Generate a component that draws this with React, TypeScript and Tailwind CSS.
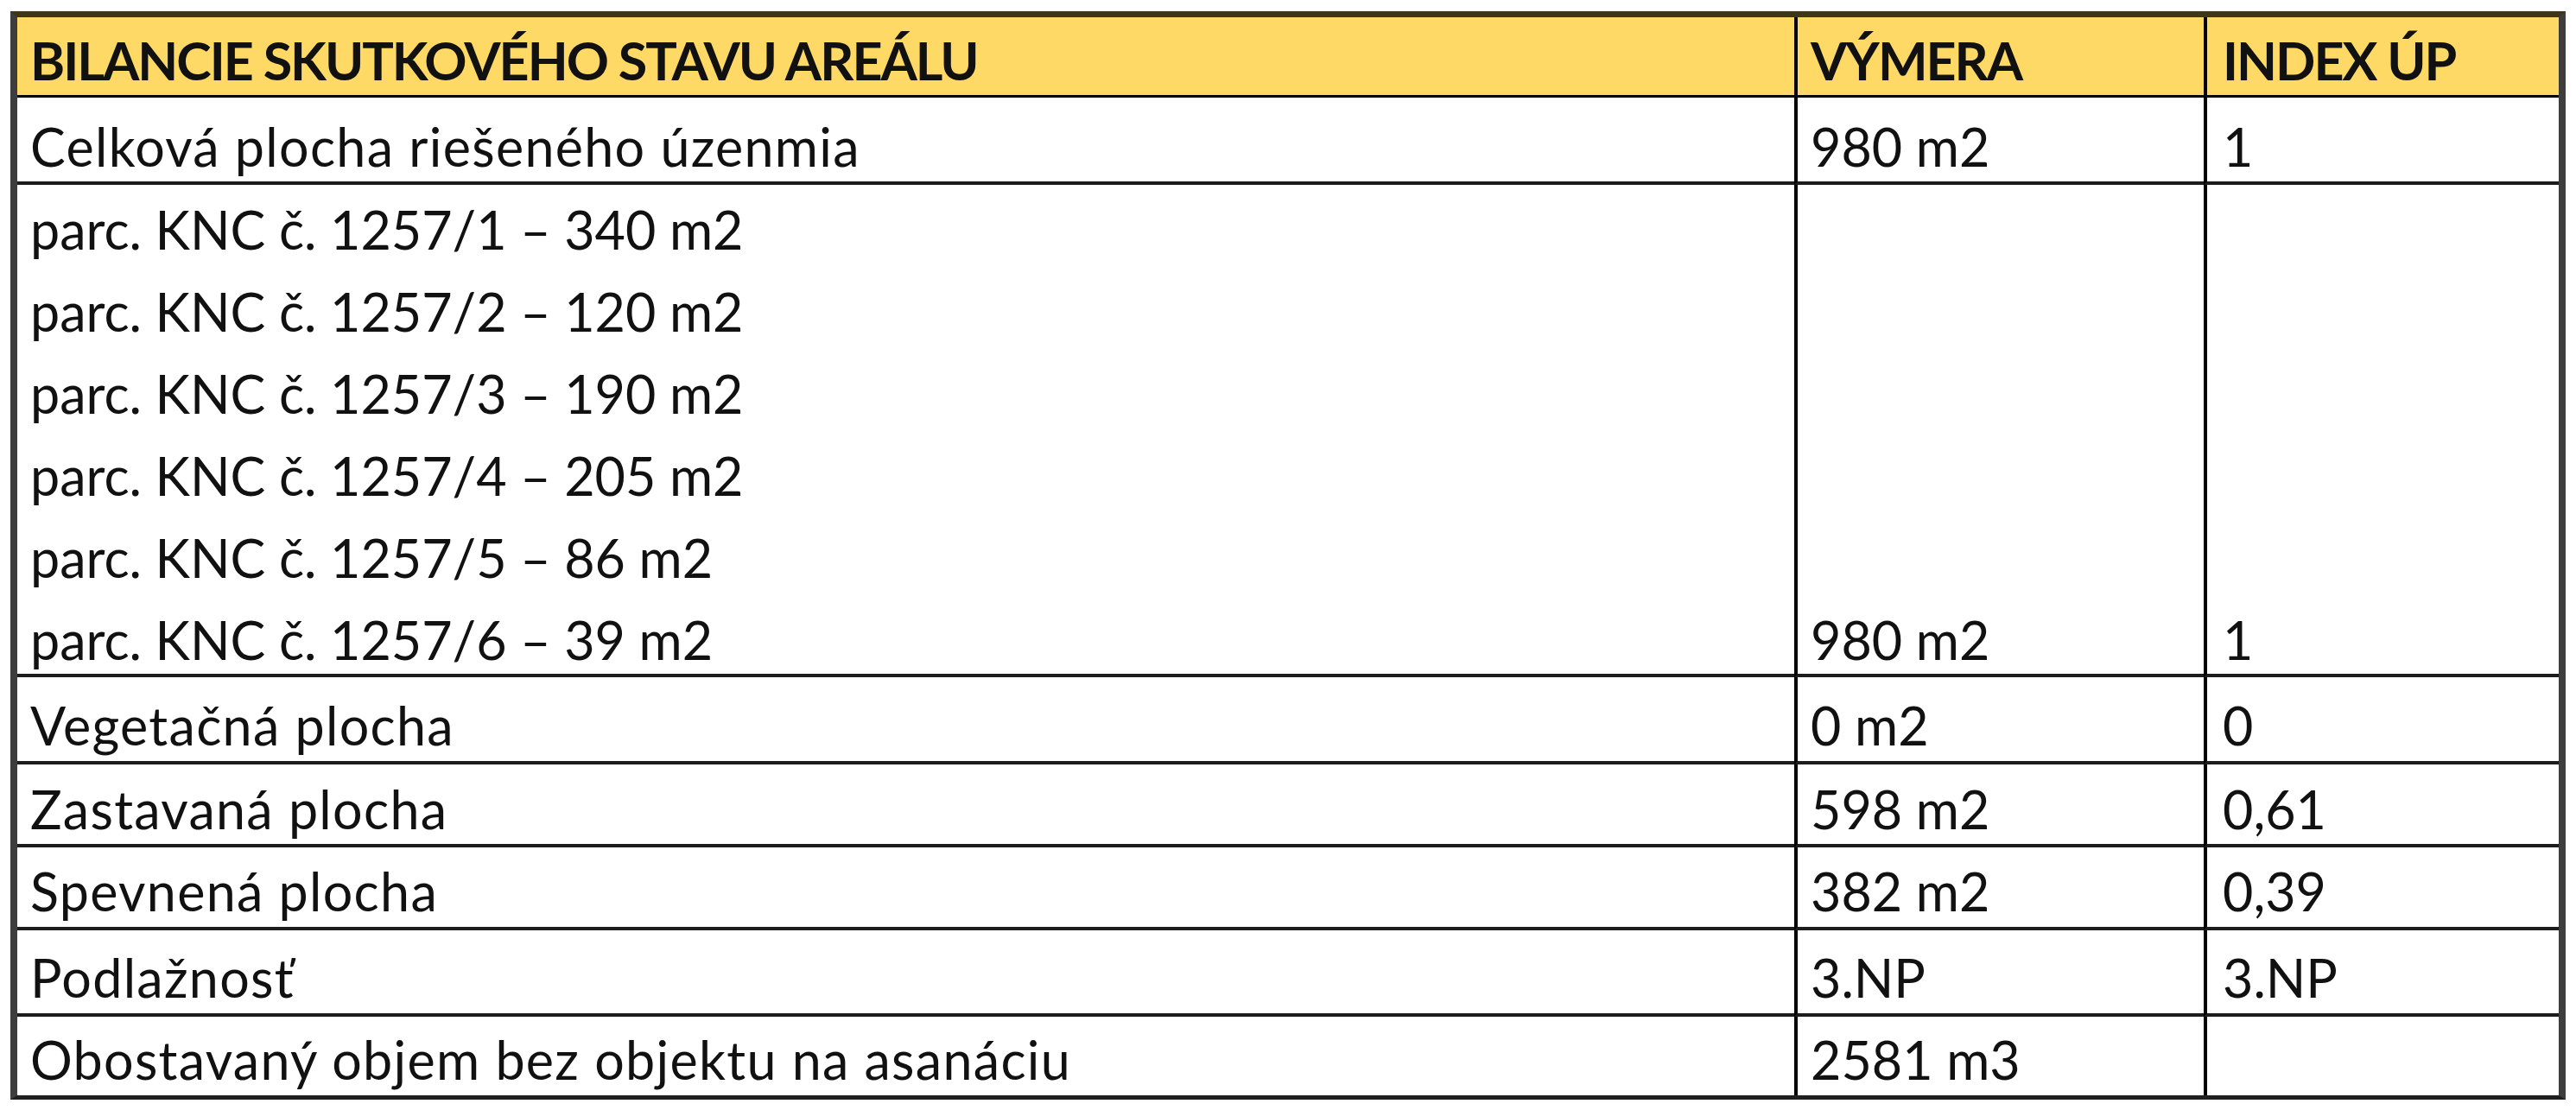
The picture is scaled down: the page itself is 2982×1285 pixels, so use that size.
import React from 'react';

// Bilance table: label / výmera / index ÚP
type Row = {
  label: string;
  area: string;
  index: string;
  h: string; // row height incl. bottom rule
  pt: string; // top padding that puts the baseline where the sheet has it
  last?: boolean;
};

const rows: Row[] = [
  { label: 'Celková plocha riešeného úzenmia', area: '980 m2', index: '1', h: 'h-[101px]', pt: 'pt-[20px]' },
  { label: 'Vegetačná plocha', area: '0 m2', index: '0', h: 'h-[101px]', pt: 'pt-[19px]' },
  { label: 'Zastavaná plocha', area: '598 m2', index: '0,61', h: 'h-[96px]', pt: 'pt-[15px]' },
  { label: 'Spevnená plocha', area: '382 m2', index: '0,39', h: 'h-[96px]', pt: 'pt-[14px]' },
  { label: 'Podlažnosť', area: '3.NP', index: '3.NP', h: 'h-[100px]', pt: 'pt-[18px]' },
  { label: 'Obostavaný objem bez objektu na asanáciu', area: '2581 m3', index: '', h: 'h-[91px]', pt: 'pt-[13px]', last: true },
];

const parcels = [
  'parc. KNC č. 1257/1 – 340 m2',
  'parc. KNC č. 1257/2 – 120 m2',
  'parc. KNC č. 1257/3 – 190 m2',
  'parc. KNC č. 1257/4 – 205 m2',
  'parc. KNC č. 1257/5 – 86 m2',
  'parc. KNC č. 1257/6 – 39 m2',
];

const font = "font-['Lato','Noto_Sans',sans-serif]";

function SimpleRow({ row }: { row: Row }) {
  const rule = row.last ? '' : 'border-b-4 border-[#1c1c1c]';
  const cell = `${row.h} ${row.pt} ${rule} px-[15px] leading-[73px] whitespace-nowrap`;
  return (
    <>
      <div className={`${cell} tracking-[1.3px]`}>{row.label}</div>
      <div className={`${cell} border-l-4 border-l-black`}>{row.area}</div>
      <div className={`${cell} border-l-4 border-l-black px-[18px]`}>{row.index}</div>
    </>
  );
}

export default function App() {
  const [first, ...rest] = rows;
  const head = 'h-[93px] bg-[#ffd966] pt-[13px] leading-[73px] font-bold tracking-[-2px] border-b-[3px] border-black whitespace-nowrap';

  return (
    <div className={`min-h-screen bg-white pt-[13px] pl-[12px] text-[61px] text-[#111] ${font}`}>
      <div className="w-[2958px] border-x-8 border-t-[7px] border-b-[5px] border-x-[#3d3d3d] border-t-[#3f3518] border-b-[#1f1f1f]">
        <div className="grid grid-cols-[2057px_474px_411px]">
          {/* header */}
          <div className={`${head} px-[15px]`}>BILANCIE SKUTKOVÉHO STAVU AREÁLU</div>
          <div className={`${head} px-[15px] border-l-4 border-l-black`}>VÝMERA</div>
          <div className={`${head} px-[18px] border-l-4 border-l-black`}>INDEX ÚP</div>

          <SimpleRow row={first} />

          {/* parcels block, totals sit on the last line */}
          <div className="h-[570px] pt-[4px] px-[15px] border-b-4 border-[#1c1c1c]">
            {parcels.map((p) => (
              <div key={p} className="leading-[95px] whitespace-nowrap">
                {p}
              </div>
            ))}
          </div>
          <div className="h-[570px] pt-[4px] px-[15px] border-b-4 border-[#1c1c1c] border-l-4 border-l-black">
            <div className="mt-[475px] leading-[95px]">980 m2</div>
          </div>
          <div className="h-[570px] pt-[4px] px-[18px] border-b-4 border-[#1c1c1c] border-l-4 border-l-black">
            <div className="mt-[475px] leading-[95px]">1</div>
          </div>

          {rest.map((r) => (
            <SimpleRow key={r.label} row={r} />
          ))}
        </div>
      </div>
    </div>
  );
}
